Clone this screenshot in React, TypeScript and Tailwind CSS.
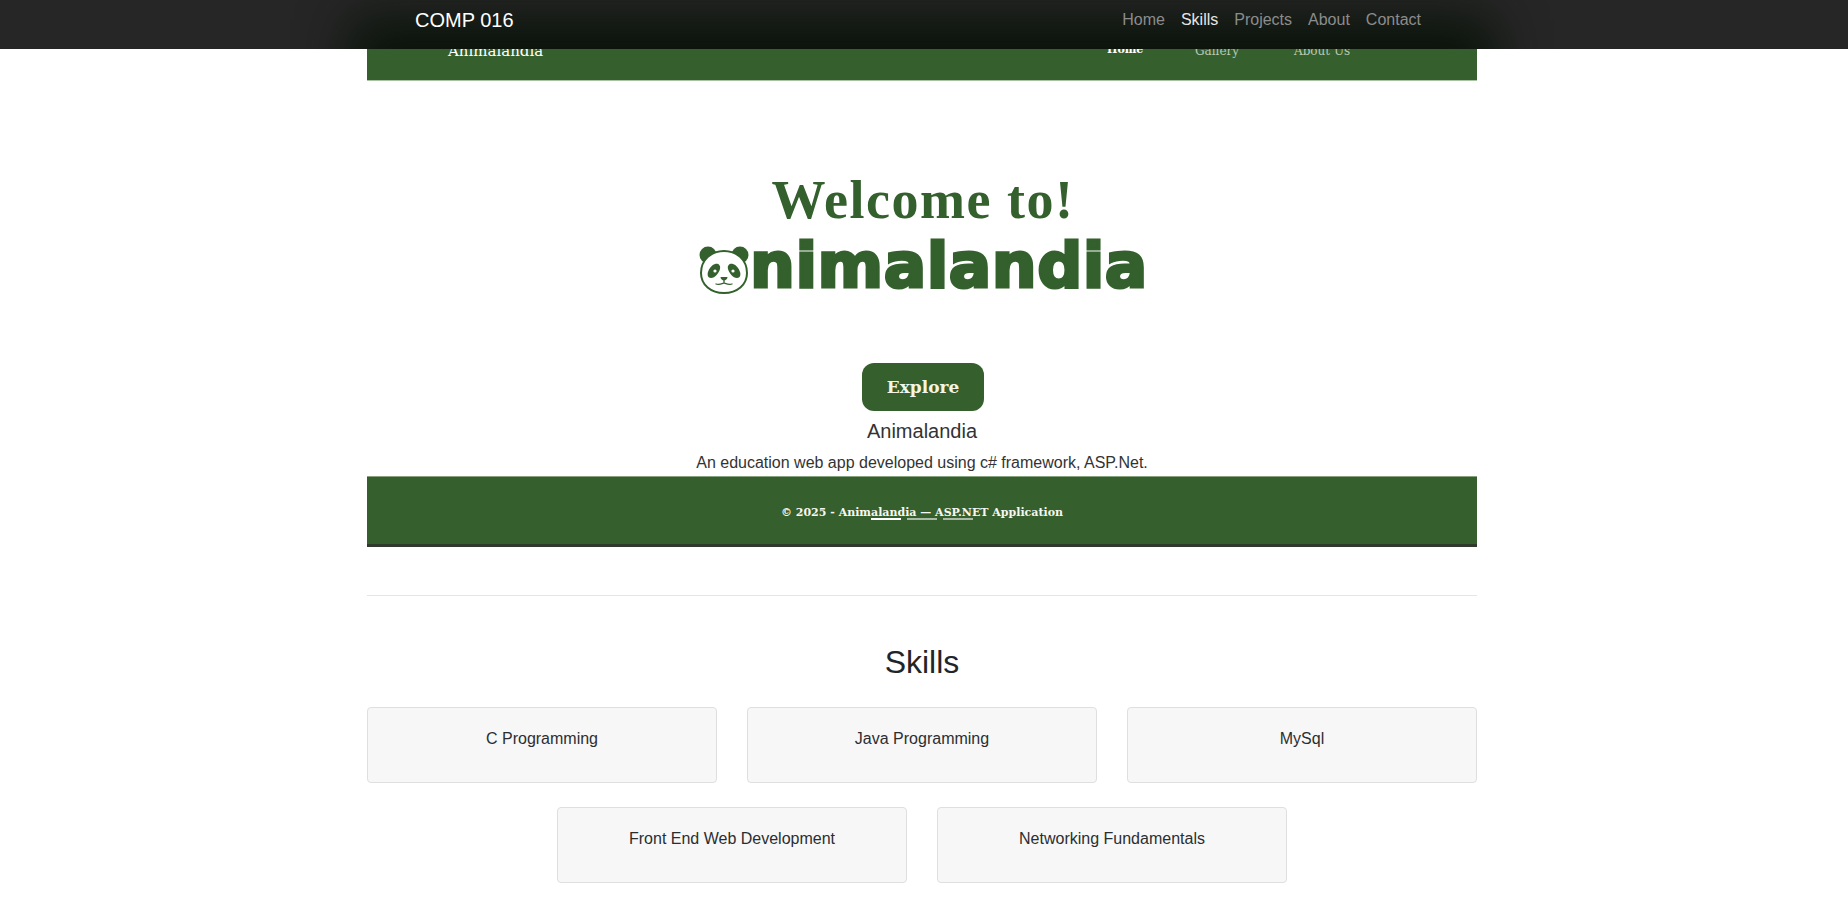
import React from 'react';

const navLinks = ['Home', 'Skills', 'Projects', 'About', 'Contact'];
const skillCards = ['C Programming', 'Java Programming', 'MySql', 'Front End Web Development', 'Networking Fundamentals'];

const PandaHead: React.FC = () => (
  <svg viewBox="0 0 52 52" className="w-[52px] h-[52px] shrink-0">
    <circle cx="10" cy="11" r="8.5" fill="#33602c" />
    <circle cx="42" cy="11" r="8.5" fill="#33602c" />
    <path d="M26 7C13 7 3 16 3 29c0 12 10 20 23 20s23-8 23-20C49 16 39 7 26 7Z" fill="#fff" stroke="#33602c" strokeWidth="2" />
    <path d="M17 20c3-1 6 1 5 5-1 4-5 9-9 9-3 0-4-3-3-6 1-4 4-7 7-8Z" fill="#33602c" />
    <path d="M35 20c-3-1-6 1-5 5 1 4 5 9 9 9 3 0 4-3 3-6-1-4-4-7-7-8Z" fill="#33602c" />
    <circle cx="17" cy="27" r="1.6" fill="#fff" />
    <circle cx="35" cy="27" r="1.6" fill="#fff" />
    <path d="M22.500 33h7c0 2-2 3.600-3.500 3.600S22.500 35 22.500 33Z" fill="#33602c" />
    <path d="M26 36v3M18 40c3 1 5 0 8-1 3 1 5 2 8 1" fill="none" stroke="#33602c" strokeWidth="1.3" strokeLinecap="round" />
  </svg>
);

const App: React.FC = () => {
  return (
    <div className="min-h-screen bg-white text-[#212529] font-['Liberation_Sans',Arial,sans-serif] overflow-hidden">
      <nav className="relative h-[49px] bg-[#262626] overflow-hidden">
        <div className="absolute left-[380px] top-[49px] w-[1084px] h-[31px] shadow-[0_0_50px_30px_#0a130a]" />
        <div className="relative flex items-center justify-between h-full pb-[9px] pl-[415px] pr-[427px]">
          <span className="text-[20px] text-white">COMP 016</span>
          <ul className="flex gap-4 text-base">
            {navLinks.map((link) => (
              <li key={link} className={link === 'Skills' ? 'text-[#e6e6e6]' : 'text-[#8c8c8c]'}>
                {link}
              </li>
            ))}
          </ul>
        </div>
      </nav>

      <main className="w-[1110px] ml-[367px]">
        <div className="relative h-[32px] bg-[#355f2c] border-b border-[#a9c2a2] overflow-hidden font-['DejaVu_Serif',serif] font-bold">
          <span className="absolute left-[81px] top-[-9px] text-[15px] font-normal text-white">Animalandia</span>
          <span className="absolute left-[740px] top-[-7px] text-[11px] text-white">Home</span>
          <span className="absolute left-[828px] top-[-7px] text-[12px] font-normal text-[#b9c9b4]">Gallery</span>
          <span className="absolute left-[927px] top-[-7px] text-[12px] font-normal text-[#b9c9b4]">About Us</span>
        </div>

        <div className="h-[282px] flex flex-col items-center pt-[91px] text-[#33602c]">
          <div className="text-[54px] leading-[56px] font-['Liberation_Serif',serif] font-bold tracking-[1.5px] ml-[2px]">Welcome to!</div>
          <div className="flex items-end mt-[8px] ml-[2px]">
            <PandaHead />
            <span className="text-[63px] leading-[60px] font-['DejaVu_Sans',sans-serif] font-bold tracking-[0.5px] [-webkit-text-stroke:3px_#33602c]">nimalandia</span>
          </div>
        </div>

        <div className="flex flex-col items-center">
          <button className="w-[122px] h-[48px] ml-[2px] pt-[1px] rounded-[12px] bg-[#355f2c] text-[#f1f6e9] text-[17px] font-bold font-['DejaVu_Serif',serif]">
            Explore
          </button>
          <h5 className="mt-[8px] text-[20px] leading-6 text-[#333333]">Animalandia</h5>
          <p className="mt-[8px] text-base leading-6 text-[#333333]">An education web app developed using c# framework, ASP.Net.</p>
        </div>

        <footer className="relative mt-[1px] h-[71px] flex items-center justify-center bg-[#355f2c] border-t border-[#86a27e] border-b-[3px] border-b-[#2f3a2c] font-['DejaVu_Serif',serif] font-bold text-[11px] text-[#f5f7f1]">
          <span className="pt-[6px]">© 2025 - Animalandia — ASP.NET Application</span>
          <div className="absolute left-[504px] top-[41px] flex gap-[6px]">
            <div className="w-[30px] h-[2px] bg-white" />
            <div className="w-[30px] h-[2px] bg-[#a9baa5]" />
            <div className="w-[30px] h-[2px] bg-[#a9baa5]" />
          </div>
        </footer>

        <hr className="mt-[48px] border-t border-[#e5e5e5]" />

        <h2 className="mt-[47px] text-[32px] leading-[38px] text-center">Skills</h2>

        <div className="mt-[26px] flex flex-wrap justify-center gap-x-[30px] gap-y-[24px]">
          {skillCards.map((skill) => (
            <div key={skill} className="w-[350px] h-[76px] pt-[19px] text-center text-base leading-6 text-[#2b2e31] bg-[#f7f7f7] border border-[#dfdfdf] rounded">
              {skill}
            </div>
          ))}
        </div>
      </main>
    </div>
  );
};

export default App;
